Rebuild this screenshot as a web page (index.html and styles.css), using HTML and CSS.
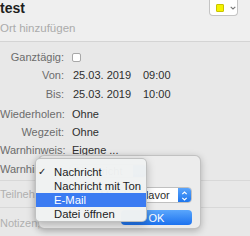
FILE: index.html
```html
<!DOCTYPE html>
<html>
<head>
<meta charset="utf-8">
<link rel="stylesheet" href="styles.css">
</head>
<body>
<div class="win">
  <header class="head">
    <div class="titles">
      <div class="title">test</div>
      <div class="place">Ort hinzufügen</div>
    </div>
    <div class="colorbtn">
      <span class="swatch"></span>
      <svg class="chev" width="6" height="4" viewBox="0 0 6 4"><path d="M0.7 0.8 L3 3 L5.3 0.8" fill="none" stroke="#777" stroke-width="1.1"/></svg>
    </div>
  </header>
  <section class="form">
    <div class="row r1"><span class="lbl">Ganztägig:</span><span class="val"><span class="check"></span></span></div>
    <div class="row r2"><span class="lbl">Von:</span><span class="val"><span class="date">25.03. 2019</span><span class="time">09:00</span></span></div>
    <div class="row r3"><span class="lbl">Bis:</span><span class="val"><span class="date">25.03. 2019</span><span class="time">10:00</span></span></div>
    <div class="row r4"><span class="lbl">Wiederholen:</span><span class="val">Ohne</span></div>
    <div class="row r5"><span class="lbl">Wegzeit:</span><span class="val">Ohne</span></div>
    <div class="row r6"><span class="lbl">Warnhinweis:</span><span class="val">Eigene ...</span></div>
    <div class="row r7"><span class="lbl">Warnhinweis:</span><span class="val"></span></div>
  </section>
  <div class="sect s1"><span class="ph">Teilnehmer hinzufügen</span></div>
  <div class="sect s2"><span class="ph">Notizen, URL oder Anhänge hinzufügen</span></div>

  <div class="popover">
    <div class="popup p1"><span class="ptext">Nachricht</span><span class="step"></span></div>
    <div class="popup p2"><span class="ptext">Minuten davor</span><span class="step">
      <svg width="13" height="16" viewBox="0 0 13 16"><path d="M4.3 6.2 L6.5 4 L8.7 6.2 M4.3 9.8 L6.5 12 L8.7 9.8" fill="none" stroke="#fff" stroke-width="1.2"/></svg>
    </span></div>
    <div class="okbtn">OK</div>
  </div>

  <div class="menu">
    <div class="item"><span class="tick">✓</span>Nachricht</div>
    <div class="item">Nachricht mit Ton</div>
    <div class="item sel">E-Mail</div>
    <div class="item">Datei öffnen</div>
  </div>
</div>
</body>
</html>
```

FILE: styles.css
```css
html, body {
  margin: 0;
  padding: 0;
}
body {
  width: 250px;
  height: 236px;
  overflow: hidden;
  font-family: "Liberation Sans", Arial, sans-serif;
  background: #e8e8e8;
}
.win {
  position: relative;
  width: 250px;
  height: 236px;
  background: #e8e8e8;
}
.head {
  height: 41px;
  background: #efefef;
  border-bottom: 1px solid #d4d4d4;
  display: flex;
  justify-content: space-between;
  align-items: flex-start;
}
.title {
  font-size: 14px;
  font-weight: bold;
  color: #1e1e1e;
  line-height: 17px;
}
.place {
  margin-top: 4px;
  font-size: 11.5px;
  line-height: 14px;
  color: #ababab;
}
.colorbtn {
  margin-right: 12px;
  width: 29px;
  height: 16px;
  background: #fff;
  border: 0.5px solid #c4c4c4;
  border-top: none;
  border-radius: 0 0 4px 4px;
  display: flex;
  align-items: center;
  box-sizing: border-box;
  padding-left: 6px;
  gap: 6px;
}
.swatch {
  width: 8px;
  height: 8px;
  background: #f4f200;
  border: 0.5px solid #c9c400;
  box-sizing: border-box;
  border-radius: 1px;
}
.chev { margin-top: 1px; }

.form {
  padding-top: 6px;
}
.row {
  display: flex;
  align-items: center;
  font-size: 11px;
}
.r1 { height: 18px; }
.r2 { height: 17px; }
.r3 { height: 21px; }
.r4 { height: 19px; }
.r5 { height: 17px; }
.r6 { height: 19px; }
.r7 { height: 19px; }
.lbl {
  width: 64px;
  text-align: right;
  color: #6c6c6c;
  white-space: nowrap;
}
.val {
  margin-left: 8px;
  color: #2e2e2e;
  display: flex;
  align-items: center;
}
.check {
  width: 9px;
  height: 9px;
  background: #fff;
  border: 0.5px solid #a8a8a8;
  border-radius: 2px;
  box-sizing: border-box;
}
.date { margin-left: 1px; width: 70px; }

.sect {
  border-top: 1px solid #d8d8d8;
  font-size: 11px;
  color: #b0b0b0;
  display: flex;
  align-items: center;
  white-space: nowrap;
}
.s1 { margin-top: 2px; height: 26px; }
.s2 { height: 30px; }

.popover {
  position: absolute;
  left: 38px;
  top: 155px;
  width: 163px;
  height: 74px;
  box-sizing: border-box;
  background: #ececec;
  border: 0.5px solid rgba(0,0,0,0.18);
  border-radius: 6px;
  box-shadow: 0 2px 7px rgba(0,0,0,0.25);
  display: flex;
  flex-direction: column;
  align-items: flex-end;
  padding: 8px 8px 0 0;
}
.popup {
  height: 15px;
  background: #fff;
  border: 0.5px solid #c0c0c0;
  border-radius: 4px;
  display: flex;
  align-items: center;
  justify-content: space-between;
  font-size: 11px;
  color: #2e2e2e;
  box-sizing: border-box;
  overflow: hidden;
}
.p1 { width: 78px; margin-right: 45px; height: 14px; }
.p2 { width: 99px; margin-top: 9px; height: 16px; }
.ptext { padding-left: 6px; white-space: nowrap; }
.step {
  width: 13px;
  align-self: stretch;
  background: linear-gradient(#5aa4fb, #1e76ee);
  display: flex;
}
.okbtn {
  margin-top: 7px;
  width: 71px;
  height: 15px;
  border-radius: 4px;
  background: linear-gradient(#5aa6fc, #1c72ef);
  color: #fff;
  font-size: 11px;
  display: flex;
  align-items: center;
  justify-content: center;
}

.menu {
  position: absolute;
  left: 35px;
  top: 158px;
  width: 112px;
  height: 64px;
  box-sizing: border-box;
  padding-top: 6px;
  background: rgba(240, 242, 242, 0.98);
  border: 0.5px solid rgba(0,0,0,0.2);
  border-radius: 5px;
  box-shadow: 0 3px 8px rgba(0,0,0,0.25);
  overflow: hidden;
}
.item {
  position: relative;
  height: 14px;
  line-height: 14px;
  padding-left: 18px;
  font-size: 11.3px;
  color: #222;
  white-space: nowrap;
}
.item.sel {
  background: #3b7bf2;
  color: #fff;
}
.tick {
  position: absolute;
  left: 2px;
  top: 0;
  font-size: 10px;
  font-family: "DejaVu Sans", sans-serif;
}
```
